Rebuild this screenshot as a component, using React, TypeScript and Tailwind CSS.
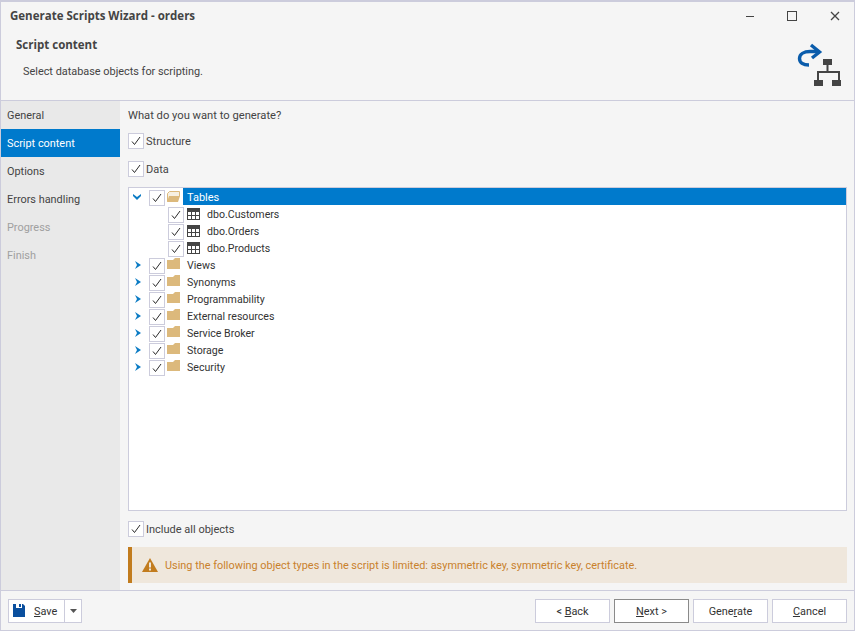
import type { ReactNode } from "react";

const navItems = [
  { label: "General", state: "normal" },
  { label: "Script content", state: "active" },
  { label: "Options", state: "normal" },
  { label: "Errors handling", state: "normal" },
  { label: "Progress", state: "disabled" },
  { label: "Finish", state: "disabled" },
];

const tables = ["dbo.Customers", "dbo.Orders", "dbo.Products"];
const folders = ["Views", "Synonyms", "Programmability", "External resources", "Service Broker", "Storage", "Security"];

function Box() {
  return (
    <span className="flex h-[16px] w-[16px] shrink-0 items-center justify-center border border-[#ccccdc] bg-white">
      <svg width="10" height="10" viewBox="0 0 10 10">
        <path d="M1 5.500l2.500 3L9 1" stroke="#2b2b2b" strokeWidth="1" fill="none" />
      </svg>
    </span>
  );
}

function Folder({ open }: { open?: boolean }) {
  return (
    <svg width="13" height="11" viewBox="0 0 13 11" className="shrink-0">
      {open ? (
        <>
          <path d="M.5 10.500V2.500l2-2h10v5" stroke="#dcb97c" fill="#f7f0e2" />
          <path d="M0 11l2-6h11l-2 6z" fill="#dcb97c" />
        </>
      ) : (
        <path d="M0 2h6l2-2h5v11H0z" fill="#dcb97c" />
      )}
    </svg>
  );
}

function TableIcon() {
  return (
    <svg width="13" height="12" viewBox="0 0 13 12" className="shrink-0">
      <rect x="0" y="0" width="13" height="3" fill="#444" />
      <path d="M.5 0v12M4.500 0v12M8.500 0v12M12.500 0v12M0 3.500h13M0 7.500h13M0 11.500h13" stroke="#444" fill="none" />
    </svg>
  );
}

function Chevron({ open }: { open?: boolean }) {
  return open ? (
    <svg width="8" height="6" viewBox="0 0 8 6" className="ml-[4px] mt-[6px] shrink-0">
      <path d="M0 0l4 3 4-3v2L4 6 0 2z" fill="#0a7bc4" />
    </svg>
  ) : (
    <svg width="6" height="8" viewBox="0 0 6 8" className="ml-[6px] mr-[1px] mt-[5px] shrink-0">
      <path d="M0 0l6 4-6 4 2-4z" fill="#0a7bc4" />
    </svg>
  );
}

function WizardButton({ children, primary }: { children: ReactNode; primary?: boolean }) {
  return (
    <button className={`h-[24px] w-[75px] border bg-white pt-[3px] text-[#333] ${primary ? "border-[#8a8a8a]" : "border-[#ccccdc]"}`}>
      {children}
    </button>
  );
}

export default function App() {
  return (
    <div className="flex h-[631px] w-[855px] flex-col border border-t-2 border-[#ccccdc] bg-[#f5f5f5] font-['Roboto',sans-serif] text-[10.9px] text-[#444]">
      {/* header */}
      <header className="relative h-[99px] shrink-0 border-b border-[#ccccdc]">
        <div className="flex h-[27px] items-center pl-[9px]">
          <span className="font-['Open_Sans',sans-serif] text-[11.5px] font-bold">Generate Scripts Wizard - orders</span>
          <div className="ml-auto flex items-center">
            <svg width="10" height="10" viewBox="0 0 10 10" className="mr-[32px]">
              <path d="M1 5.500h8" stroke="#444" />
            </svg>
            <svg width="10" height="10" viewBox="0 0 10 10" className="mr-[33px]">
              <rect x=".5" y=".5" width="9" height="9" stroke="#444" fill="none" />
            </svg>
            <svg width="10" height="10" viewBox="0 0 10 10" className="mr-[14px]">
              <path d="M1 1l8 8M9 1l-8 8" stroke="#444" strokeWidth="1.300" />
            </svg>
          </div>
        </div>
        <div className="pl-[15px] pt-[8px] font-['Open_Sans',sans-serif] text-[11.5px] font-bold leading-[16px]">Script content</div>
        <div className="pl-[22px] pt-[11px] leading-[16px]">Select database objects for scripting.</div>
        <svg width="50" height="50" viewBox="0 0 50 50" className="absolute right-[9px] top-[38px]">
          <path d="M14 25C8 25 4.500 22.500 4.500 18.500 4.500 14 9 11.500 15 11.500h8" stroke="#0a5cab" strokeWidth="3.400" fill="none" />
          <path d="M16 5l8.500 7L17 18" stroke="#0a5cab" strokeWidth="3.400" fill="none" />
          <rect x="28" y="19" width="9" height="6" fill="#444" />
          <path d="M31.500 25h2v6H45v9h-2v-7H24v7h-2v-9h9.500z" fill="#444" />
          <rect x="19" y="40" width="9" height="6" fill="#444" />
          <rect x="37" y="40" width="9" height="6" fill="#444" />
        </svg>
      </header>

      <div className="flex min-h-0 flex-1">
        {/* steps */}
        <nav className="w-[119px] shrink-0 bg-[#e9e9e9]">
          {navItems.map((n) => (
            <div
              key={n.label}
              className={`flex h-[28px] items-center pl-[6px] pt-[3px] ${
                n.state === "active" ? "bg-[#007acc] text-white" : n.state === "disabled" ? "text-[#a0a0a0]" : "text-[#444]"
              }`}
            >
              {n.label}
            </div>
          ))}
        </nav>

        {/* content */}
        <main className="flex min-w-0 flex-1 flex-col pl-[8px] pr-[7px]">
          <div className="pt-[7px] text-[11.2px] leading-[16px]">What do you want to generate?</div>
          <label className="mt-[9px] flex h-[16px] items-center gap-[2px] text-[11px] leading-[16px]">
            <Box />
            <span className="pt-[2px]">Structure</span>
          </label>
          <label className="mt-[12px] flex h-[16px] items-center gap-[2px] text-[11px] leading-[16px]">
            <Box />
            <span className="pt-[2px]">Data</span>
          </label>

          <div className="mt-[10px] h-[324px] border border-[#ccccdc] bg-white text-[10.6px]">
            <div className="flex h-[17px] items-start">
              <Chevron open />
              <span className="ml-[8px] mt-[2px]"><Box /></span>
              <span className="ml-[2px] mt-[3px]"><Folder open /></span>
              <span className="ml-[3px] flex h-[17px] flex-1 items-center bg-[#007acc] pl-[4px] pt-[3px] text-[11px] text-white">Tables</span>
            </div>
            {tables.map((t) => (
              <div key={t} className="flex h-[17px] items-start pl-[39px]">
                <span className="mt-[2px]"><Box /></span>
                <span className="ml-[3px] mt-[3px]"><TableIcon /></span>
                <span className="ml-[7px] self-center pt-[2px] text-[#333]">{t}</span>
              </div>
            ))}
            {folders.map((f) => (
              <div key={f} className="flex h-[17px] items-start">
                <Chevron />
                <span className="ml-[7px] mt-[2px]"><Box /></span>
                <span className="ml-[2px] mt-[2px]"><Folder /></span>
                <span className="ml-[7px] self-center pt-[2px] text-[#333]">{f}</span>
              </div>
            ))}
          </div>

          <label className="mt-[10px] flex h-[16px] items-center gap-[2px] text-[11px] leading-[16px]">
            <Box />
            <span className="pt-[2px]">Include all objects</span>
          </label>

          <div className="mt-[10px] flex h-[36px] items-center border-l-4 border-[#c27c1e] bg-[#efe7dc] pl-[10px] text-[#c9812c]">
            <svg width="16" height="14" viewBox="0 0 16 14" className="shrink-0">
              <path d="M8 0l8 14H0z" fill="#c27c1e" />
              <path d="M7 4.500h2v5H7zM7 10.500h2v2H7z" fill="#efe7dc" />
            </svg>
            <span className="ml-[7px] pt-[3px]">Using the following object types in the script is limited: asymmetric key, symmetric key, certificate.</span>
          </div>
        </main>
      </div>

      {/* footer */}
      <footer className="flex h-[40px] shrink-0 items-center border-t border-[#ccccdc] pl-[7px] pr-[7px]">
        <div className="flex h-[24px] w-[74px] border border-[#ccccdc] bg-white text-[#333]">
          <div className="flex flex-1 items-center border-r border-[#ccccdc] pl-[4px]">
            <svg width="12" height="13" viewBox="0 0 12 13" className="shrink-0">
              <path d="M0 0h3v4h6V0h1l2 2v11H0z" fill="#0a4f9e" />
              <rect x="6" y="0" width="2" height="3" fill="#0a4f9e" />
            </svg>
            <span className="ml-[9px] pt-[3px]"><span className="underline">S</span>ave</span>
          </div>
          <div className="flex w-[16px] items-center justify-center">
            <svg width="7" height="4" viewBox="0 0 7 4"><path d="M0 0h7L3.500 4z" fill="#555" /></svg>
          </div>
        </div>
        <div className="ml-auto flex gap-[4px]">
          <WizardButton>{"< "}<span className="underline">B</span>ack</WizardButton>
          <WizardButton primary><span className="underline">N</span>ext {">"}</WizardButton>
          <WizardButton>Gene<span className="underline">r</span>ate</WizardButton>
          <WizardButton><span className="underline">C</span>ancel</WizardButton>
        </div>
      </footer>
    </div>
  );
}
